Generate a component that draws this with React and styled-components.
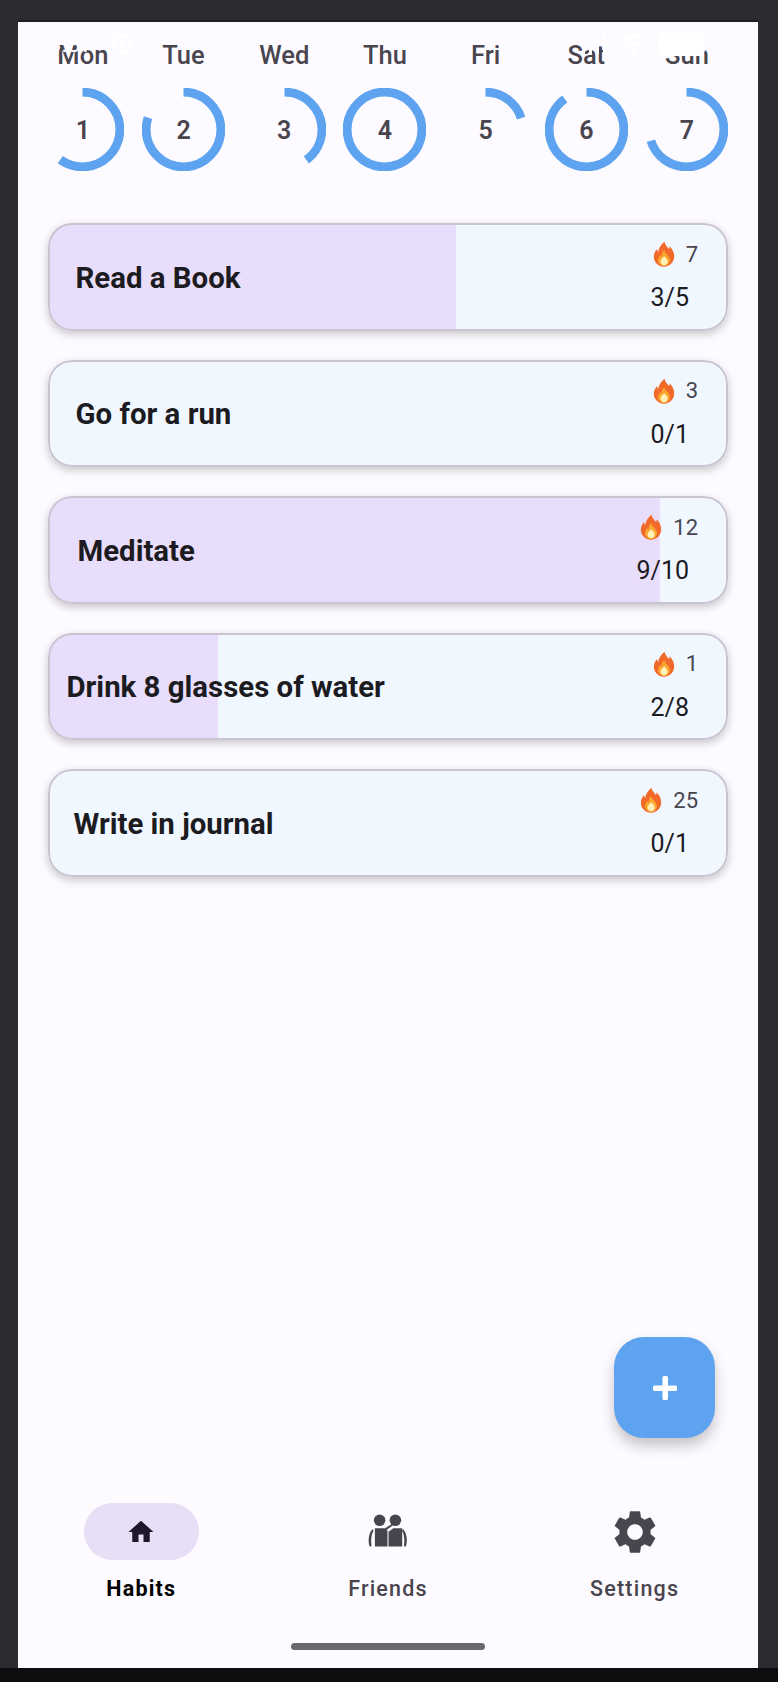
import styled, { createGlobalStyle } from "styled-components";
import { MdHome, MdSettings } from "react-icons/md";

const GlobalStyle = createGlobalStyle`
  html, body {
    margin: 0;
    padding: 0;
    background: #2b2c30;
    font-family: Roboto, "Liberation Sans", sans-serif;
  }
`;

const days = [
  { name: "Mon", num: 1, value: 0.6 },
  { name: "Tue", num: 2, value: 0.8 },
  { name: "Wed", num: 3, value: 0.4 },
  { name: "Thu", num: 4, value: 1 },
  { name: "Fri", num: 5, value: 0.2 },
  { name: "Sat", num: 6, value: 0.9 },
  { name: "Sun", num: 7, value: 0.7 },
];

const habits = [
  { title: "Read a Book", streak: 7, done: 3, total: 5, inset: 28 },
  { title: "Go for a run", streak: 3, done: 0, total: 1, inset: 28 },
  { title: "Meditate", streak: 12, done: 9, total: 10, inset: 30 },
  { title: "Drink 8 glasses of water", streak: 1, done: 2, total: 8, inset: 19 },
  { title: "Write in journal", streak: 25, done: 0, total: 1, inset: 26 },
];

const Ring = ({ value }) => {
  const r = 37.4;
  const c = 2 * Math.PI * r;
  return (
    <RingSvg viewBox="0 0 83 83">
      <circle
        cx="41.5"
        cy="41.5"
        r={r}
        fill="none"
        stroke="#5ea3f0"
        strokeWidth="8.8"
        strokeDasharray={`${c * value} ${c}`}
        transform="rotate(-90 41.5 41.5)"
      />
    </RingSvg>
  );
};

const Flame = () => (
  <FlameSvg viewBox="0 0 24 28">
    <path
      fill="#f26a2a"
      d="M12.5 0.5c.8 3.6 3 5.6 5 8 .5-1 .7-2 .6-3 3 3 5 6.6 5 11 0 6.6-5 11.3-11.1 11.3S.9 23.100.9 17c0-3.500 1.500-6.200 3.500-8.500.1 1.300.5 2.300 1.300 3.200C6.200 7.400 8.600 3.500 12.500.5z"
    />
    <path
      fill="#fba72f"
      d="M12.300 9.500c.3 2.400 1.800 3.600 3.200 5.200 1.500 1.700 2.900 3.500 2.900 5.900 0 3.500-2.900 6.400-6.400 6.400s-6.400-2.900-6.400-6.300c0-2.300 1-4.100 2.400-5.500.2.800.5 1.400 1.100 1.900.2-2.800 1.100-5.500 3.200-7.600z"
    />
    <path
      fill="#fff0b8"
      d="M12.200 16.500c1.900 1.900 3.800 3.300 3.800 5.700 0 2.200-1.700 4.100-3.900 4.100s-3.900-1.800-3.900-4c0-2.400 2.300-3.700 4-5.800z"
    />
  </FlameSvg>
);

const FriendsIcon = () => (
  <FriendsSvg viewBox="0 0 39 32" fill="#49454f">
    <circle cx="12" cy="6" r="5.5" />
    <circle cx="27" cy="6" r="5.5" />
    <path d="M7.500 13.500h9l3 2.500V31h-12z" />
    <path d="M20.500 17l4.500-3.500h8.500V31h-13z" />
    <path d="M5 14.500l1.300 1.200C4 19.500 3.500 24.500 4.300 30.800L2.500 31C1 27 1 19 5 14.500z" />
    <path d="M34.500 14.500l-1.200 1.200c2.200 3.800 2.700 8.800 1.900 15.100l1.800.2c1.500-4 1.500-12-2.500-16.500z" />
    <path d="M16.500 14l7-4.500 1.200 1.300-6.700 5z" />
  </FriendsSvg>
);

const HabitCard = ({ habit }) => (
  <Card>
    <CardFill style={{ width: `${(habit.done / habit.total) * 100}%` }} />
    <CardBody $inset={habit.inset}>
      <HabitTitle>{habit.title}</HabitTitle>
      <Stats>
        <Streak>
          <Flame />
          <StreakNum>{habit.streak}</StreakNum>
        </Streak>
        <Count>
          {habit.done}/{habit.total}
        </Count>
      </Stats>
    </CardBody>
  </Card>
);

export default function App() {
  return (
    <>
      <GlobalStyle />
      <Device>
        <Screen>
          <StatusOverlay>
            <StatusLeft>
              <StatusTime>3:37</StatusTime>
              <svg width="22" height="22" viewBox="0 0 22 22" fill="none" stroke="#fff" strokeWidth="3">
                <path d="M11 2l8 3v6c0 4.500-3.500 7.500-8 9-4.500-1.500-8-4.500-8-9V5z" />
                <path d="M9 8l4 7" />
              </svg>
            </StatusLeft>
            <StatusRight>
              <svg width="26" height="20" viewBox="0 0 26 20" fill="#fff">
                <path d="M0 16h3v4H0zM7 10h3v10H7zM14 5h3v15h-3zM21 0h3v20h-3z" />
              </svg>
              <svg width="30" height="22" viewBox="0 0 32 24" fill="none" stroke="#fff" strokeWidth="4">
                <path d="M3 9c8-7 18-7 26 0" />
                <path d="M9 14c4-3 10-3 14 0" />
                <circle cx="16" cy="20" r="1.500" fill="#fff" />
              </svg>
              <Battery />
            </StatusRight>
          </StatusOverlay>

          <Week>
            {days.map((d) => (
              <Day key={d.name}>
                <DayName>{d.name}</DayName>
                <RingBox>
                  <Ring value={d.value} />
                  <DayNum>{d.num}</DayNum>
                </RingBox>
              </Day>
            ))}
          </Week>

          <HabitList>
            {habits.map((h) => (
              <HabitCard key={h.title} habit={h} />
            ))}
          </HabitList>

          <FabRow>
            <Fab>
              <svg width="24" height="24" viewBox="0 0 24 24" fill="#fff">
                <rect x="9.500" y="0" width="5.500" height="24" rx="1.500" />
                <rect x="0" y="9.500" width="24" height="5.500" rx="1.500" />
              </svg>
            </Fab>
          </FabRow>

          <BottomNav>
            <NavItem>
              <IconPill $active>
                <MdHome size={30} color="#1d192b" />
              </IconPill>
              <NavLabel $active>Habits</NavLabel>
            </NavItem>
            <NavItem>
              <IconPill>
                <FriendsIcon />
              </IconPill>
              <NavLabel>Friends</NavLabel>
            </NavItem>
            <NavItem>
              <IconPill>
                <MdSettings size={52} color="#49454f" />
              </IconPill>
              <NavLabel>Settings</NavLabel>
            </NavItem>
          </BottomNav>

          <HandleRow>
            <Handle />
          </HandleRow>
        </Screen>
      </Device>
    </>
  );
}

const Device = styled.div`
  width: 778px;
  height: 1682px;
  box-sizing: border-box;
  padding: 22px 20px 14px 18px;
  background: #2b2c30;
  overflow: hidden;
  position: relative;
  box-shadow: inset 0 -14px 0 #0e0e11;
`;

const Screen = styled.div`
  width: 740px;
  height: 1646px;
  background: #fdfbff;
  position: relative;
  display: flex;
  flex-direction: column;
  box-shadow: 0 -2px 0 #1f2023;
`;

const StatusOverlay = styled.div`
  position: absolute;
  top: 8px;
  left: 30px;
  right: 53px;
  display: flex;
  justify-content: space-between;
  align-items: center;
  z-index: 2;
  pointer-events: none;
`;

const StatusLeft = styled.div`
  display: flex;
  align-items: center;
  gap: 17px;
`;

const StatusTime = styled.span`
  color: #fff;
  font-size: 24px;
`;

const StatusRight = styled.div`
  display: flex;
  align-items: center;
  gap: 10px;
`;

const Battery = styled.div`
  width: 47px;
  height: 23px;
  border-radius: 6px;
  background: #fff;
`;

const Week = styled.div`
  display: grid;
  grid-template-columns: repeat(7, 100.7px);
  padding: 18px 0 0 14.500px;
`;

const Day = styled.div`
  display: flex;
  flex-direction: column;
  align-items: center;
  gap: 18px;
`;

const DayName = styled.div`
  font-size: 25.500px;
  line-height: 30px;
  font-weight: 500;
  color: #49454f;
`;

const RingBox = styled.div`
  position: relative;
  width: 83px;
  height: 83px;
  display: flex;
  align-items: center;
  justify-content: center;
`;

const RingSvg = styled.svg`
  position: absolute;
  inset: 0;
  width: 83px;
  height: 83px;
`;

const DayNum = styled.span`
  font-size: 25px;
  font-weight: 600;
  color: #49454f;
  padding-top: 2px;
`;

const HabitList = styled.div`
  display: flex;
  flex-direction: column;
  gap: 29px;
  padding: 52px 30px 0 29.500px;
`;

const Card = styled.div`
  position: relative;
  height: 107.500px;
  border-radius: 24px;
  background: #f0f7ff;
  overflow: hidden;
  box-shadow: 0 3px 8px rgba(0, 0, 0, 0.22);

  &::after {
    content: "";
    position: absolute;
    inset: 0;
    border: 2px solid #cac4d0;
    border-radius: 24px;
  }
`;

const CardFill = styled.div`
  position: absolute;
  top: 0;
  left: 0;
  bottom: 0;
  background: #e8ddfb;
`;

const CardBody = styled.div`
  position: relative;
  height: 100%;
  display: flex;
  align-items: center;
  justify-content: space-between;
  padding: 0 30px 0 ${(p) => p.$inset}px;
`;

const HabitTitle = styled.div`
  font-size: 29.400px;
  font-weight: 700;
  color: #1c1b1f;
  padding-top: 2px;
`;

const Stats = styled.div`
  display: flex;
  flex-direction: column;
  align-items: flex-end;
  gap: 16px;
`;

const Streak = styled.div`
  display: flex;
  align-items: center;
  gap: 11px;
`;

const FlameSvg = styled.svg`
  width: 22px;
  height: 26px;
`;

const StreakNum = styled.span`
  font-size: 22px;
  color: #49454f;
`;

const Count = styled.div`
  font-size: 25px;
  color: #1c1b1f;
  margin-right: 9px;
`;

const FabRow = styled.div`
  position: absolute;
  top: 1315px;
  right: 43px;
`;

const Fab = styled.div`
  width: 101px;
  height: 101px;
  border-radius: 30px;
  background: #5ea3f0;
  display: flex;
  align-items: center;
  justify-content: center;
  box-shadow: 0 8px 14px rgba(0, 0, 0, 0.22);
`;

const BottomNav = styled.div`
  margin-top: auto;
  display: grid;
  grid-template-columns: repeat(3, 1fr);
`;

const NavItem = styled.div`
  display: flex;
  flex-direction: column;
  align-items: center;
  gap: 15px;
`;

const IconPill = styled.div`
  width: 115px;
  height: 57px;
  border-radius: 29px;
  display: flex;
  align-items: center;
  justify-content: center;
  background: ${(p) => (p.$active ? "#e6dff6" : "transparent")};
`;

const FriendsSvg = styled.svg`
  width: 41px;
  height: 33.600px;
  margin-top: -2px;
`;

const NavLabel = styled.div`
  font-size: 21.500px;
  line-height: 28px;
  letter-spacing: 1.200px;
  font-weight: ${(p) => (p.$active ? 700 : 500)};
  color: ${(p) => (p.$active ? "#000" : "#49454f")};
`;

const HandleRow = styled.div`
  display: flex;
  justify-content: center;
  padding: 40px 0 18px;
`;

const Handle = styled.div`
  width: 194px;
  height: 7px;
  border-radius: 4px;
  background: #6a686c;
`;
